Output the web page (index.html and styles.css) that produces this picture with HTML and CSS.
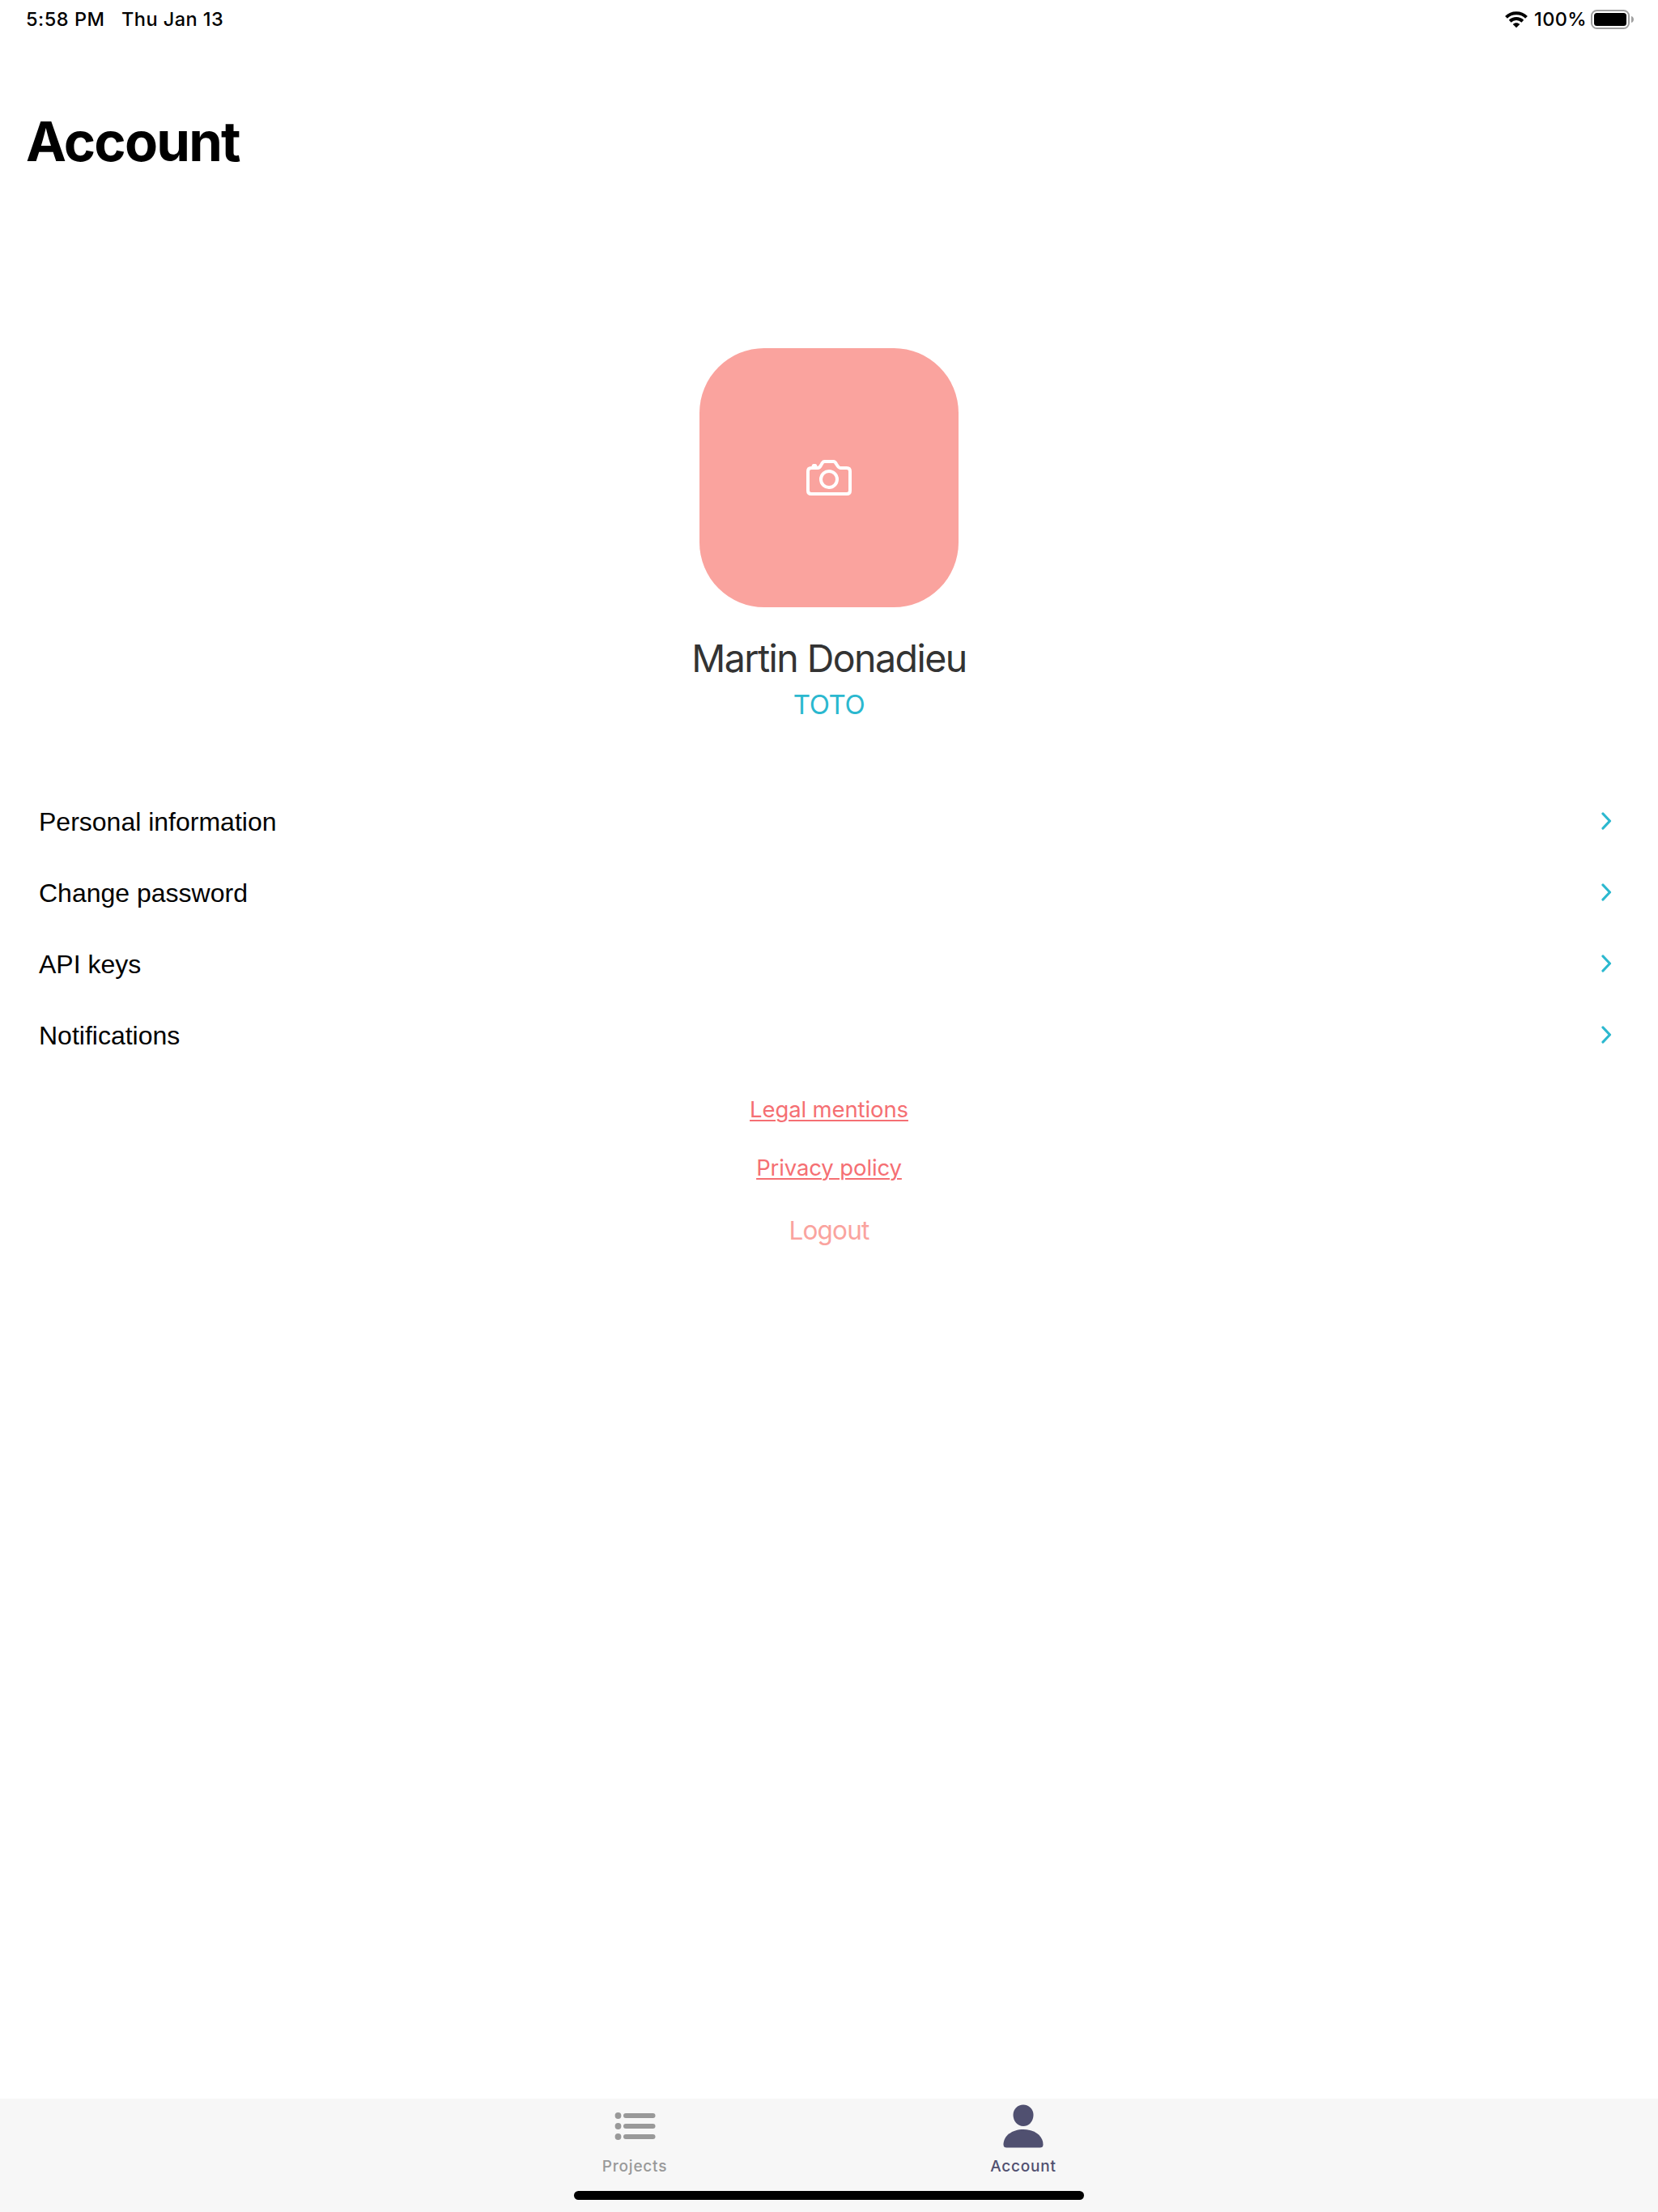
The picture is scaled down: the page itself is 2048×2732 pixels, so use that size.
FILE: index.html
```html
<!DOCTYPE html>
<html lang="en">
<head>
<meta charset="utf-8">
<title>Account</title>
<link rel="stylesheet" href="styles.css">
</head>
<body>
<div class="screen">
  <header class="status">
    <span class="time">5:58 PM</span>
    <span class="date">Thu Jan 13</span>
    <svg class="wifi" width="28" height="21" viewBox="0 0 28 21" fill="none" stroke="#000" stroke-width="4">
      <path d="M1.5 7.3C8.3.6 19.7.6 26.500 7.300"/>
      <path d="M6.200 12.200C10.500 8 17.500 8 21.800 12.200"/>
      <path d="M14 20.200L9.700 15.900C12.100 13.700 15.900 13.700 18.300 15.900Z" fill="#000" stroke="none"/>
    </svg>
    <span class="percent">100%</span>
    <svg class="battery" width="54" height="24" viewBox="0 0 54 24">
      <rect x="1" y="1" width="46" height="22" rx="6.500" fill="none" stroke="#a0a0a0" stroke-width="2"/>
      <rect x="4" y="4" width="40" height="16" rx="3.500"/>
      <path d="M50 8C54 9 54 15 50 16Z" fill="#a0a0a0"/>
    </svg>
  </header>

  <h1 class="title">Account</h1>

  <main>
    <section class="profile">
      <button class="avatar" aria-label="Change photo">
        <svg width="56" height="44" viewBox="0 0 56 44" fill="none" stroke="#fff" stroke-width="4" stroke-linejoin="round">
          <path d="M6 10H14C17 10 17.500 7.500 19 5C20 3 21 2 22.500 2H33.500C35 2 36 3 37 5C38.500 7.500 40 10 42 10H50C52.500 10 54 11.500 54 14V38C54 40.500 52.500 42 50 42H6C3.500 42 2 40.500 2 38V14C2 11.500 3.500 10 6 10Z"/>
          <circle cx="28" cy="24" r="10"/>
          <path d="M6.500 9C6.500 6 7.500 5 9 5H11C12.500 5 13.500 6 13.500 9Z" fill="#fff" stroke="none"/>
        </svg>
      </button>
      <div class="name">Martin Donadieu</div>
      <div class="nick">TOTO</div>
    </section>

    <nav class="list">
      <a class="row"><span>Personal information</span><svg class="chevron" viewBox="0 0 14 22"><path d="M2 2L10.500 11L2 20"/></svg></a>
      <a class="row"><span>Change password</span><svg class="chevron" viewBox="0 0 14 22"><path d="M2 2L10.500 11L2 20"/></svg></a>
      <a class="row"><span>API keys</span><svg class="chevron" viewBox="0 0 14 22"><path d="M2 2L10.500 11L2 20"/></svg></a>
      <a class="row"><span>Notifications</span><svg class="chevron" viewBox="0 0 14 22"><path d="M2 2L10.500 11L2 20"/></svg></a>
    </nav>

    <section class="links">
      <a class="link">Legal mentions</a>
      <a class="link">Privacy policy</a>
      <a class="logout">Logout</a>
    </section>
  </main>

  <footer class="tabbar">
    <nav class="tabs">
      <a class="tab">
        <svg class="tab-icon" width="56" height="56" viewBox="0 0 56 56" fill="currentColor">
          <circle cx="7.500" cy="15" r="3.900"/><circle cx="7.500" cy="28" r="3.900"/><circle cx="7.500" cy="41" r="3.900"/>
          <rect x="14" y="12" width="39.500" height="6" rx="3"/><rect x="14" y="25" width="39.500" height="6" rx="3"/><rect x="14" y="38" width="39.500" height="6" rx="3"/>
        </svg>
        <span class="tab-label">Projects</span>
      </a>
      <a class="tab active">
        <svg class="tab-icon" width="56" height="56" viewBox="0 0 56 56" fill="currentColor">
          <path d="M28 1.500C35 1.500 40.500 7 40.500 14C40.500 21.500 35.500 28 28 28S15.500 21.500 15.500 14C15.500 7 21 1.500 28 1.500Z"/>
          <path d="M28 32C42 32 52.500 40 52.500 50.500C52.500 53.500 51 54.500 48.500 54.500H7.500C5 54.500 3.500 53.500 3.500 50.500C3.500 40 14 32 28 32Z"/>
        </svg>
        <span class="tab-label">Account</span>
      </a>
    </nav>
    <div class="home-indicator"></div>
  </footer>
</div>
</body>
</html>
```
FILE: styles.css
```css
* { box-sizing: border-box; }
body { margin: 0; background: #fff; color: #000; font-family: Inter, "Liberation Sans", sans-serif; }
.screen { width: 2048px; height: 2732px; display: flex; flex-direction: column; overflow: hidden; }
main { flex: 1; }

.status { height: 48px; padding: 0 29px 0 32px; display: flex; align-items: center; font-size: 23.500px; font-weight: 450; line-height: 48px; white-space: nowrap; }
.time { width: 118px; letter-spacing: .55px; }
.date { letter-spacing: .45px; }
.wifi { margin-left: auto; margin-right: 8px; }
.percent { width: 70px; letter-spacing: .4px; }
.battery { flex: none; }

.title { margin: 85px 0 0 32px; font-size: 67px; line-height: 84px; font-weight: 700; letter-spacing: -1.800px; }

.profile { margin-top: 213px; display: flex; flex-direction: column; align-items: center; }
.avatar { width: 320px; height: 320px; padding: 0; border: 0; border-radius: 80px; background: #faa39e; display: flex; align-items: center; justify-content: center; }
.name { margin-top: 33px; font-size: 46.500px; line-height: 60px; color: #333; letter-spacing: -1.550px; }
.nick { font-size: 33px; line-height: 54px; color: #2bb8cf; letter-spacing: -.4px; }

.list { margin-top: 73px; padding: 0 50px 0 48px; }
.row { height: 88px; display: flex; align-items: center; justify-content: space-between; font-family: "Liberation Sans", Arial, sans-serif; font-size: 32px; line-height: 40px; }
.row span { padding-top: 2px; }
.chevron { width: 14px; height: 22px; margin-right: 6px; fill: none; stroke: #2bb8cf; stroke-width: 3.200; stroke-linecap: round; stroke-linejoin: round; }

.links { display: flex; flex-direction: column; align-items: center; padding-top: 12px; }
.link { height: 72px; line-height: 72px; font-size: 27.500px; color: #f56f73; letter-spacing: -.12px; text-decoration: underline; text-decoration-thickness: 2px; text-underline-offset: 3px; }
.logout { height: 84px; line-height: 84px; font-size: 31.500px; color: #faa39e; letter-spacing: -.8px; }

.tabbar { height: 140px; background: #f7f7f7; display: flex; flex-direction: column; align-items: center; }
.tabs { display: flex; height: 114px; }
.tab { width: 480px; padding-top: 6px; display: flex; flex-direction: column; align-items: center; color: #999; }
.tab.active { color: #505070; }
.tab-label { margin-top: 9px; font-size: 19px; line-height: 26px; font-weight: 500; letter-spacing: .8px; }
.home-indicator { width: 630px; height: 11px; border-radius: 6px; background: #000; }
```
